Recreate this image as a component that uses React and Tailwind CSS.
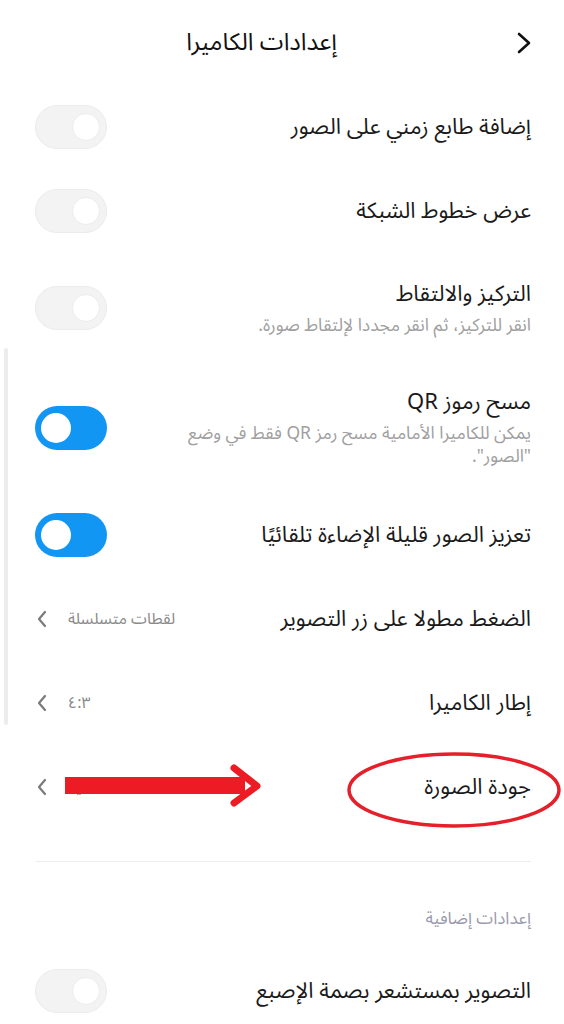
import React from "react";

const FONT = { fontFamily: '"Noto Sans Arabic", "Noto Naskh Arabic", "DejaVu Sans", sans-serif' };

function Toggle({ on }) {
  return (
    <div
      dir="ltr"
      className={
        "w-[72px] h-[44px] rounded-full flex items-center px-[6px] shrink-0 " +
        (on ? "bg-[#1296f4] justify-start" : "bg-[#f3f3f3] border border-[#ebebeb] justify-end")
      }
    >
      <div
        className={
          "rounded-full bg-white " +
          (on ? "w-[30px] h-[30px]" : "w-[28px] h-[28px] border border-[#ececec]")
        }
      />
    </div>
  );
}

function Chevron({ className }) {
  return (
    <svg width="12" height="18" viewBox="0 0 12 18" className={className}>
      <path d="M9 2 L3 9 L9 16" fill="none" stroke="#7a7a7a" strokeWidth="2.2" strokeLinecap="round" strokeLinejoin="round" />
    </svg>
  );
}

function ToggleRow({ title, subtitle, on, h }) {
  return (
    <div className={"flex items-center justify-between gap-[20px] pr-[33px] pl-[35px] " + h}>
      <div className="flex flex-col">
        <div className="text-[22px] leading-[28px] text-[#1a1a1a]">{title}</div>
        {subtitle && (
          <div className="text-[17.5px] leading-[23px] text-[#a0a0a0] mt-[6px] max-w-[372px]">{subtitle}</div>
        )}
      </div>
      <Toggle on={on} />
    </div>
  );
}

function NavRow({ title, value, children }) {
  return (
    <div className="relative flex items-center justify-between pr-[33px] pl-[36px] h-[84px]">
      <div className="text-[22px] leading-[30px] text-[#1a1a1a]">{title}</div>
      <div className="flex items-center gap-[20px]">
        <div className="text-[16px] text-[#8a8a8a]">{value}</div>
        <Chevron />
      </div>
      {children}
    </div>
  );
}

export default function App() {
  return (
    <div dir="rtl" style={FONT} className="relative w-[564px] h-[1024px] overflow-hidden bg-white">
      {/* scrollbar */}
      <div className="absolute left-[4px] top-[348px] w-[4px] h-[377px] bg-[#ececec] rounded-full" />

      {/* header */}
      <div className="flex items-center h-[85px] pr-[33px]">
        <svg width="14" height="22" viewBox="0 0 14 22" className="shrink-0">
          <path d="M2 2 L12 11 L2 20" fill="none" stroke="#111" strokeWidth="2.6" strokeLinecap="round" strokeLinejoin="round" />
        </svg>
        <div className="mr-[180px] text-[24px] leading-[32px] text-[#111]">إعدادات الكاميرا</div>
      </div>

      <ToggleRow title="إضافة طابع زمني على الصور" h="h-[84px]" />
      <ToggleRow title="عرض خطوط الشبكة" h="h-[84px]" />
      <ToggleRow title="التركيز والالتقاط" subtitle="انقر للتركيز، ثم انقر مجددا لإلتقاط صورة." h="h-[110px]" />
      <ToggleRow
        title="مسح رموز QR"
        subtitle={'يمكن للكاميرا الأمامية مسح رمز QR فقط في وضع "الصور".'}
        on
        h="h-[130px]"
      />
      <ToggleRow title="تعزيز الصور قليلة الإضاءة تلقائيًا" on h="h-[84px]" />
      <NavRow title="الضغط مطولا على زر التصوير" value="لقطات متسلسلة" />
      <NavRow title="إطار الكاميرا" value="٤:٣" />
      <NavRow title="جودة الصورة" value="عالية">
        <svg className="absolute left-0 top-0" width="564" height="84" viewBox="0 0 564 84">
          <ellipse cx="454" cy="45" rx="105" ry="36" fill="none" stroke="#e5202a" strokeWidth="3.5" />
          <rect x="65" y="32" width="180" height="17" fill="#ed1c24" />
          <path d="M234 23 L257 41 L234 58" fill="none" stroke="#ed1c24" strokeWidth="7" strokeLinecap="round" strokeLinejoin="round" />
        </svg>
      </NavRow>

      <div className="mt-[32px] mr-[33px] ml-[36px] h-px bg-[#ececec]" />

      <div className="pr-[33px] pt-[45px] text-[17px] leading-[24px] text-[#9a9aae]">إعدادات إضافية</div>

      <div className="flex items-center justify-between pr-[33px] pl-[35px] mt-[18px] h-[84px]">
        <div className="text-[22px] leading-[30px] text-[#1a1a1a]">التصوير بمستشعر بصمة الإصبع</div>
        <Toggle />
      </div>
    </div>
  );
}
